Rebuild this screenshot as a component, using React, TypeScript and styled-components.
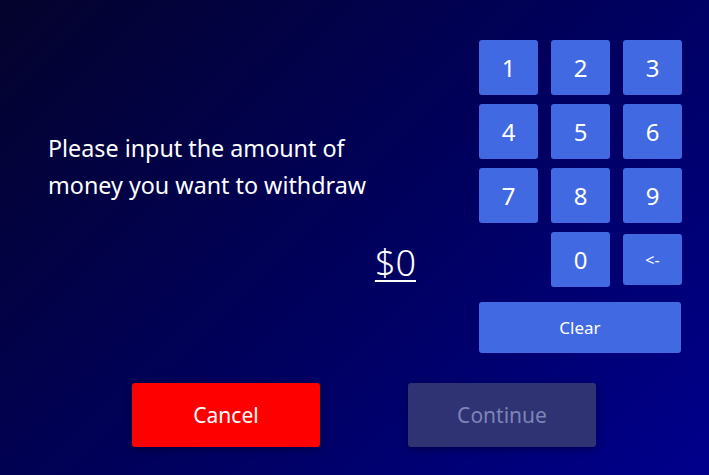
import React from "react";
import styled, { createGlobalStyle } from "styled-components";

const Global = createGlobalStyle`
  html, body { margin: 0; padding: 0; }
  body { font-family: "Noto Sans", "Open Sans", sans-serif; }
  * { box-sizing: border-box; }
`;

const Screen = styled.div`
  width: 709px;
  height: 475px;
  overflow: hidden;
  background: linear-gradient(135deg, #04032c 0%, #000060 55%, #00008c 100%);
  color: #ffffff;
  display: flex;
  flex-direction: column;
`;

const Top = styled.div`
  display: flex;
  justify-content: space-between;
  padding: 40px 27px 0 48px;
`;

const Prompt = styled.div`
  display: flex;
  flex-direction: column;
  width: 368px;
`;

const Message = styled.p`
  margin: 90px 0 0 0;
  font-size: 23.3px;
  line-height: 37px;
  white-space: nowrap;
`;

const Amount = styled.span`
  align-self: flex-end;
  margin-top: 37px;
  font-size: 36px;
  font-weight: 300;
  line-height: 44px;
  text-decoration: underline;
  text-decoration-thickness: 2px;
  text-underline-offset: 4px;
`;

const Keypad = styled.div`
  display: grid;
  grid-template-columns: repeat(3, 59px);
  grid-auto-rows: 55px;
  column-gap: 13px;
  row-gap: 9px;
  width: 203px;
`;

const Key = styled.button<{ $small?: boolean; $col?: number }>`
  grid-column: ${(p) => p.$col ?? "auto"};
  align-self: center;
  height: ${(p) => (p.$small ? "51px" : "55px")};
  border: none;
  border-radius: 3px;
  background: #4169e1;
  color: #ffffff;
  font-family: inherit;
  font-size: ${(p) => (p.$small ? "16px" : "24px")};
  padding: 0;
  cursor: pointer;
`;

const ClearKey = styled(Key)`
  grid-column: 1 / span 3;
  width: 202px;
  height: 51px;
  margin-top: 6px;
  font-size: 17px;
  align-self: start;
`;

const Actions = styled.div`
  display: flex;
  gap: 88px;
  padding-left: 132px;
  margin-top: auto;
  margin-bottom: 28px;
`;

const ActionButton = styled.button<{ $variant: "danger" | "disabled" }>`
  width: 188px;
  height: 64px;
  border: none;
  border-radius: 3px;
  font-family: inherit;
  font-size: 21px;
  background: ${(p) => (p.$variant === "danger" ? "#ff0000" : "#2f3373")};
  color: ${(p) => (p.$variant === "danger" ? "#ffffff" : "#7d84b6")};
  box-shadow: 0 2px 8px rgba(0, 0, 0, 0.35);
`;

export default function App() {
  const digits = ["1", "2", "3", "4", "5", "6", "7", "8", "9"];
  return (
    <Screen>
      <Global />
      <Top>
        <Prompt>
          <Message>
            Please input the amount of
            <br />
            money you want to withdraw
          </Message>
          <Amount>$0</Amount>
        </Prompt>
        <Keypad>
          {digits.map((d) => (
            <Key key={d}>{d}</Key>
          ))}
          <Key $col={2}>0</Key>
          <Key $small>&lt;-</Key>
          <ClearKey>Clear</ClearKey>
        </Keypad>
      </Top>
      <Actions>
        <ActionButton $variant="danger">Cancel</ActionButton>
        <ActionButton $variant="disabled" disabled>
          Continue
        </ActionButton>
      </Actions>
    </Screen>
  );
}
